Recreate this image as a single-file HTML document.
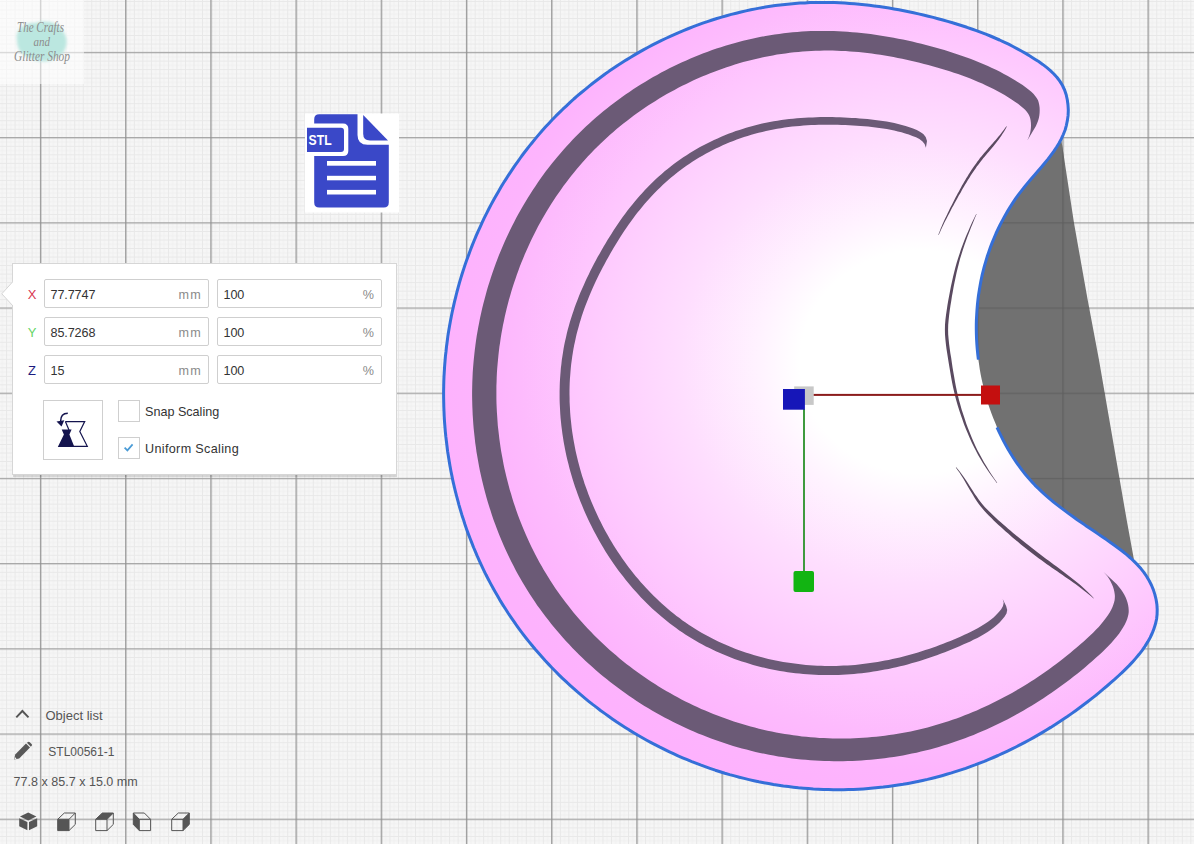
<!DOCTYPE html>
<html><head><meta charset="utf-8"><title>STL viewer</title><style>
html,body{margin:0;padding:0}
body{width:1194px;height:844px;overflow:hidden;position:relative;background:#f6f6f6;font-family:"Liberation Sans",sans-serif}
.abs{position:absolute}
.wm{position:absolute;left:0;top:0;width:84px;height:84px;background:rgba(255,255,255,.55)}
.panel{position:absolute;left:12px;top:263px;width:383px;height:210px;background:#fff;border:1px solid #d6d6d6;box-sizing:content-box}
.pshadow{position:absolute;left:12.5px;top:474.5px;width:384px;height:2px;background:rgba(0,0,0,.13)}
.lbl{position:absolute;left:13px;width:12px;text-align:center;font-size:13px;line-height:28px}
.inp{position:absolute;width:163px;height:27px;border:1px solid #cfcfcf;border-radius:2px;background:#fff;box-sizing:content-box}
.inp .v{position:absolute;left:5.5px;top:0.5px;line-height:28px;font-size:12.6px;color:#333;letter-spacing:-0.1px}
.inp .u{position:absolute;right:7px;top:0.5px;line-height:28px;font-size:12.6px;color:#8a8a8a}
.inp .u.mm{letter-spacing:1.2px;right:6px}
.btn{position:absolute;left:30px;top:136px;width:58px;height:58px;border:1px solid #cfcfcf;background:#fff}
.cb{position:absolute;left:105px;width:20px;height:20px;border:1px solid #cfcfcf;background:#fff}
.ct{position:absolute;left:132px;font-size:12.6px;line-height:16px;color:#333;white-space:nowrap}
.t{position:absolute;color:#555;line-height:16px;white-space:nowrap}
</style></head><body>
<svg width="1194" height="844" viewBox="0 0 1194 844" style="position:absolute;left:0;top:0">
<defs>
<pattern id="minor" x="40.15" y="52.1" width="8.52" height="8.52" patternUnits="userSpaceOnUse"><path d="M4.76,0V8.52M0,4.76H8.52" stroke="#f0f0f0" stroke-width="1" fill="none"/><path d="M0.5,0V8.52M0,0.5H8.52" stroke="#e8e8e8" stroke-width="1" fill="none"/></pattern>
<pattern id="major" x="39.9" y="51.85" width="85.2" height="85.2" patternUnits="userSpaceOnUse"><path d="M0.75,0V85.2M0,0.75H85.2" stroke="#8f8f8f" stroke-width="1.2" fill="none"/></pattern>
<pattern id="majord" x="39.9" y="51.85" width="85.2" height="85.2" patternUnits="userSpaceOnUse"><path d="M0.75,0V85.2M0,0.75H85.2" stroke="#5e5e5e" stroke-width="1.2" fill="none"/></pattern>
<radialGradient id="pg" gradientUnits="userSpaceOnUse" cx="920" cy="362" r="480" gradientTransform="translate(0,362) scale(1,0.93) translate(0,-362)">
<stop offset="0" stop-color="#ffffff"/><stop offset="0.25" stop-color="#ffffff"/><stop offset="0.333" stop-color="#fff3ff"/><stop offset="0.5" stop-color="#fedefe"/><stop offset="0.73" stop-color="#fec6fe"/><stop offset="0.833" stop-color="#fdbbfd"/><stop offset="0.917" stop-color="#fdb4fd"/><stop offset="1" stop-color="#fdb2fd"/>
</radialGradient>
</defs>
<rect width="1194" height="844" fill="#f6f6f6"/>
<rect width="1194" height="844" fill="url(#minor)"/>
<rect width="1194" height="844" fill="url(#major)"/>
<path d="M1061.5,141.0 L1074.0,223.0 L1087.7,300.0 L1099.0,360.0 L1126.7,520.0 L1134.2,561.0 L1100.0,561.0 L1000.0,500.0 L950.0,350.0 L1000.0,200.0Z" fill="#717171"/>
<path d="M1061.5,141.0 L1074.0,223.0 L1087.7,300.0 L1099.0,360.0 L1126.7,520.0 L1134.2,561.0 L1100.0,561.0 L1000.0,500.0 L950.0,350.0 L1000.0,200.0Z" fill="url(#majord)"/>
<path d="M800.0,3.1 L804.9,2.9 L809.9,2.6 L814.8,2.5 L819.8,2.4 L824.7,2.4 L829.7,2.5 L834.6,2.6 L839.6,2.8 L844.6,3.1 L849.5,3.4 L854.5,3.8 L859.4,4.2 L864.4,4.7 L869.3,5.3 L874.3,5.9 L879.2,6.5 L884.1,7.3 L889.1,8.1 L894.0,8.9 L898.9,9.8 L903.8,10.7 L908.7,11.7 L913.6,12.8 L918.5,13.9 L923.4,15.0 L928.3,16.2 L933.2,17.4 L938.0,18.7 L942.9,20.0 L947.7,21.4 L952.5,22.8 L957.3,24.3 L962.1,25.8 L966.9,27.3 L971.7,29.0 L976.4,30.6 L981.1,32.4 L985.8,34.2 L990.4,36.0 L995.0,38.0 L999.6,40.0 L1004.1,42.1 L1008.6,44.2 L1013.0,46.5 L1017.4,48.8 L1021.8,51.2 L1026.1,53.6 L1030.3,56.2 L1034.5,58.9 L1038.7,61.6 L1042.7,64.4 L1046.6,67.4 L1050.4,70.6 L1053.9,74.0 L1057.1,77.5 L1060.0,81.4 L1062.5,85.5 L1064.6,90.0 L1066.2,94.8 L1067.3,99.8 L1068.0,105.0 L1068.3,110.2 L1068.1,115.4 L1067.4,120.4 L1066.4,125.3 L1065.1,130.0 L1063.3,134.5 L1061.3,138.9 L1059.0,143.2 L1056.5,147.3 L1053.8,151.4 L1050.8,155.4 L1047.8,159.4 L1044.6,163.3 L1041.3,167.2 L1038.0,171.0 L1034.6,174.9 L1031.3,178.7 L1028.0,182.6 L1024.7,186.6 L1021.6,190.6 L1018.5,194.6 L1015.6,198.7 L1012.8,202.9 L1010.1,207.1 L1007.5,211.4 L1005.0,215.7 L1002.6,220.1 L1000.3,224.5 L998.1,229.0 L996.0,233.5 L994.1,238.1 L992.2,242.6 L990.4,247.3 L988.8,251.9 L987.2,256.6 L985.8,261.4 L984.4,266.1 L983.2,270.9 L982.0,275.7 L981.0,280.5 L980.1,285.4 L979.3,290.3 L978.5,295.2 L977.9,300.1 L977.4,305.0 L977.0,309.9 L976.7,314.9 L976.4,319.9 L976.3,324.8 L976.3,329.8 L976.4,334.8 L976.6,339.7 L976.9,344.7 L977.3,349.7 L977.8,354.6 L978.4,359.6 L979.1,364.6 L979.8,369.5 L980.7,374.4 L981.7,379.4 L982.8,384.3 L984.0,389.1 L985.3,394.0 L986.7,398.8 L988.1,403.7 L989.7,408.5 L991.4,413.2 L993.2,418.0 L995.1,422.6 L997.0,427.3 L999.1,431.9 L1001.3,436.4 L1003.5,440.9 L1005.9,445.3 L1008.4,449.7 L1011.0,454.0 L1013.6,458.2 L1016.4,462.3 L1019.3,466.4 L1022.2,470.4 L1025.3,474.2 L1028.5,478.0 L1031.8,481.7 L1035.1,485.3 L1038.6,488.7 L1042.2,492.1 L1045.8,495.4 L1049.5,498.7 L1053.3,501.8 L1057.2,504.9 L1061.1,507.9 L1065.1,510.9 L1069.1,513.9 L1073.2,516.8 L1077.2,519.7 L1081.4,522.5 L1085.5,525.4 L1089.7,528.2 L1093.9,531.0 L1098.0,533.9 L1102.2,536.8 L1106.4,539.6 L1110.5,542.5 L1114.7,545.5 L1118.8,548.5 L1122.8,551.5 L1126.7,554.7 L1130.5,558.0 L1134.1,561.4 L1137.6,564.9 L1140.9,568.6 L1143.9,572.4 L1146.7,576.5 L1149.2,580.8 L1151.5,585.3 L1153.4,589.9 L1154.9,594.6 L1156.1,599.5 L1156.9,604.4 L1157.2,609.3 L1157.1,614.2 L1156.6,619.0 L1155.5,623.8 L1154.1,628.4 L1152.3,633.0 L1150.2,637.5 L1147.7,641.9 L1145.1,646.1 L1142.2,650.3 L1139.1,654.3 L1135.9,658.1 L1132.6,661.9 L1129.1,665.6 L1125.6,669.1 L1122.0,672.6 L1118.3,676.0 L1114.6,679.4 L1110.8,682.7 L1107.0,686.0 L1103.2,689.2 L1099.4,692.4 L1095.5,695.6 L1091.6,698.7 L1087.6,701.8 L1083.6,704.8 L1079.6,707.8 L1075.6,710.7 L1071.5,713.6 L1067.4,716.5 L1063.2,719.3 L1059.1,722.0 L1054.9,724.7 L1050.7,727.4 L1046.4,730.0 L1042.1,732.6 L1037.8,735.1 L1033.5,737.6 L1029.2,740.0 L1024.8,742.4 L1020.4,744.7 L1015.9,747.0 L1011.5,749.2 L1007.0,751.3 L1002.5,753.4 L998.0,755.5 L993.4,757.5 L988.9,759.4 L984.3,761.3 L979.6,763.1 L975.0,764.9 L970.3,766.6 L965.7,768.3 L960.9,769.9 L956.2,771.4 L951.5,772.9 L946.7,774.3 L941.9,775.7 L937.1,777.0 L932.3,778.2 L927.5,779.4 L922.6,780.5 L917.8,781.5 L912.9,782.5 L908.0,783.4 L903.1,784.3 L898.1,785.1 L893.2,785.8 L888.2,786.5 L883.3,787.1 L878.3,787.6 L873.3,788.1 L868.4,788.5 L863.4,788.9 L858.4,789.2 L853.4,789.4 L848.4,789.6 L843.4,789.7 L838.4,789.7 L833.4,789.7 L828.4,789.6 L823.3,789.5 L818.3,789.2 L813.3,789.0 L808.3,788.6 L803.4,788.2 L798.4,787.8 L793.4,787.2 L788.4,786.6 L783.4,786.0 L778.5,785.3 L773.5,784.5 L768.6,783.6 L763.7,782.7 L758.8,781.8 L753.9,780.7 L749.0,779.6 L744.1,778.4 L739.3,777.2 L734.5,775.9 L729.6,774.6 L724.8,773.2 L720.1,771.7 L715.3,770.2 L710.6,768.6 L705.8,766.9 L701.1,765.2 L696.5,763.4 L691.8,761.6 L687.2,759.7 L682.6,757.8 L678.0,755.8 L673.4,753.7 L668.9,751.6 L664.4,749.4 L659.9,747.2 L655.5,744.9 L651.1,742.6 L646.7,740.2 L642.3,737.7 L638.0,735.3 L633.7,732.7 L629.4,730.1 L625.2,727.4 L621.0,724.7 L616.8,722.0 L612.7,719.2 L608.6,716.3 L604.6,713.4 L600.5,710.5 L596.6,707.4 L592.6,704.4 L588.7,701.3 L584.8,698.1 L581.0,694.9 L577.2,691.7 L573.5,688.4 L569.8,685.1 L566.1,681.7 L562.5,678.3 L558.9,674.8 L555.4,671.3 L551.9,667.7 L548.5,664.1 L545.1,660.5 L541.8,656.8 L538.5,653.0 L535.2,649.3 L532.1,645.5 L528.9,641.6 L525.8,637.7 L522.8,633.8 L519.8,629.8 L516.9,625.8 L514.0,621.7 L511.2,617.6 L508.4,613.5 L505.7,609.3 L503.0,605.1 L500.4,600.9 L497.9,596.6 L495.4,592.3 L493.0,588.0 L490.6,583.6 L488.3,579.2 L486.0,574.8 L483.8,570.3 L481.7,565.8 L479.6,561.3 L477.5,556.7 L475.6,552.1 L473.6,547.5 L471.8,542.9 L470.0,538.3 L468.2,533.6 L466.5,528.9 L464.9,524.2 L463.4,519.4 L461.8,514.7 L460.4,509.9 L459.0,505.1 L457.7,500.2 L456.4,495.4 L455.2,490.6 L454.0,485.7 L452.9,480.8 L451.9,475.9 L450.9,471.0 L450.0,466.1 L449.2,461.2 L448.4,456.2 L447.6,451.3 L447.0,446.3 L446.4,441.3 L445.8,436.4 L445.3,431.4 L444.9,426.4 L444.5,421.4 L444.2,416.4 L444.0,411.4 L443.8,406.4 L443.7,401.4 L443.6,396.4 L443.6,391.4 L443.7,386.4 L443.8,381.4 L444.0,376.4 L444.3,371.4 L444.6,366.4 L445.0,361.4 L445.4,356.4 L446.0,351.5 L446.5,346.5 L447.2,341.5 L447.8,336.6 L448.6,331.6 L449.4,326.7 L450.3,321.8 L451.2,316.9 L452.2,312.0 L453.3,307.1 L454.4,302.2 L455.6,297.4 L456.8,292.5 L458.1,287.7 L459.4,282.9 L460.8,278.1 L462.3,273.3 L463.8,268.6 L465.4,263.8 L467.1,259.1 L468.8,254.4 L470.5,249.8 L472.3,245.1 L474.2,240.5 L476.1,235.9 L478.1,231.3 L480.2,226.8 L482.3,222.2 L484.4,217.7 L486.6,213.3 L488.9,208.8 L491.2,204.4 L493.6,200.0 L496.0,195.7 L498.5,191.4 L501.0,187.1 L503.6,182.8 L506.3,178.6 L509.0,174.4 L511.7,170.3 L514.5,166.1 L517.4,162.1 L520.3,158.0 L523.2,154.0 L526.3,150.0 L529.3,146.1 L532.5,142.2 L535.6,138.4 L538.8,134.6 L542.1,130.8 L545.4,127.1 L548.8,123.4 L552.2,119.8 L555.7,116.2 L559.3,112.7 L562.8,109.2 L566.5,105.8 L570.1,102.4 L573.8,99.0 L577.6,95.7 L581.4,92.5 L585.3,89.3 L589.2,86.1 L593.1,83.0 L597.1,80.0 L601.1,77.0 L605.1,74.0 L609.2,71.1 L613.4,68.3 L617.5,65.5 L621.8,62.8 L626.0,60.1 L630.3,57.5 L634.6,54.9 L638.9,52.4 L643.3,49.9 L647.7,47.5 L652.1,45.2 L656.6,42.9 L661.1,40.7 L665.6,38.5 L670.2,36.4 L674.7,34.3 L679.3,32.3 L684.0,30.4 L688.6,28.5 L693.3,26.7 L698.0,24.9 L702.7,23.2 L707.4,21.6 L712.2,20.0 L716.9,18.5 L721.7,17.1 L726.5,15.7 L731.3,14.4 L736.2,13.2 L741.0,12.0 L745.9,10.9 L750.8,9.8 L755.6,8.9 L760.5,7.9 L765.4,7.1 L770.3,6.3 L775.3,5.6 L780.2,5.0 L785.1,4.4 L790.1,3.9 L795.0,3.5Z" fill="url(#pg)"/>
<path d="M1116.8,584.3 L1119.0,586.9 L1121.0,589.4 L1122.7,591.9 L1124.2,594.4 L1125.5,597.0 L1126.6,599.7 L1127.5,602.4 L1128.1,605.1 L1128.5,607.6 L1128.7,610.0 L1128.7,612.2 L1128.4,614.4 L1127.9,616.6 L1127.2,619.0 L1126.2,621.6 L1124.8,624.4 L1123.2,627.3 L1121.3,630.3 L1119.2,633.4 L1116.8,636.5 L1114.2,639.6 L1111.5,642.7 L1108.6,645.8 L1105.6,648.8 L1102.4,651.9 L1099.1,655.0 L1095.6,658.1 L1092.1,661.2 L1088.5,664.3 L1084.9,667.4 L1081.3,670.4 L1077.6,673.4 L1073.9,676.3 L1070.2,679.2 L1066.5,682.0 L1062.7,684.8 L1058.9,687.6 L1055.1,690.3 L1051.2,693.0 L1047.4,695.6 L1043.5,698.2 L1039.5,700.7 L1035.6,703.2 L1031.6,705.7 L1027.6,708.1 L1023.6,710.4 L1019.5,712.7 L1015.5,715.0 L1011.4,717.2 L1007.3,719.4 L1003.1,721.5 L999.0,723.6 L994.8,725.6 L990.6,727.5 L986.4,729.5 L982.1,731.3 L977.9,733.1 L973.6,734.9 L969.3,736.6 L965.0,738.2 L960.7,739.8 L956.3,741.3 L952.0,742.8 L947.6,744.3 L943.2,745.6 L938.8,746.9 L934.3,748.2 L929.9,749.4 L925.4,750.5 L921.0,751.6 L916.5,752.7 L911.9,753.6 L907.4,754.5 L902.9,755.4 L898.3,756.2 L893.8,756.9 L889.2,757.6 L884.6,758.2 L880.0,758.8 L875.4,759.3 L870.8,759.7 L866.2,760.1 L861.5,760.4 L856.9,760.7 L852.3,760.9 L847.6,761.1 L843.0,761.2 L838.3,761.2 L833.7,761.2 L829.0,761.1 L824.4,761.0 L819.7,760.8 L815.1,760.5 L810.5,760.2 L805.8,759.8 L801.2,759.4 L796.6,758.9 L792.0,758.4 L787.4,757.8 L782.8,757.1 L778.2,756.4 L773.6,755.6 L769.1,754.7 L764.5,753.8 L760.0,752.9 L755.5,751.9 L750.9,750.8 L746.5,749.6 L742.0,748.4 L737.5,747.2 L733.1,745.9 L728.6,744.5 L724.2,743.1 L719.8,741.6 L715.4,740.1 L711.1,738.5 L706.7,736.8 L702.4,735.1 L698.1,733.4 L693.8,731.6 L689.6,729.7 L685.3,727.8 L681.1,725.8 L676.9,723.8 L672.8,721.8 L668.6,719.6 L664.5,717.5 L660.5,715.2 L656.4,713.0 L652.4,710.7 L648.4,708.3 L644.4,705.9 L640.5,703.4 L636.6,700.9 L632.7,698.3 L628.9,695.7 L625.1,693.0 L621.3,690.3 L617.6,687.6 L613.9,684.8 L610.2,682.0 L606.6,679.1 L603.0,676.2 L599.4,673.2 L595.9,670.2 L592.4,667.1 L589.0,664.0 L585.6,660.9 L582.3,657.7 L578.9,654.5 L575.7,651.2 L572.4,647.9 L569.3,644.6 L566.1,641.2 L563.0,637.8 L560.0,634.3 L557.0,630.8 L554.0,627.3 L551.1,623.7 L548.3,620.1 L545.5,616.5 L542.7,612.8 L540.0,609.1 L537.3,605.4 L534.7,601.6 L532.2,597.8 L529.7,593.9 L527.2,590.1 L524.8,586.1 L522.5,582.2 L520.2,578.2 L517.9,574.2 L515.7,570.2 L513.6,566.1 L511.5,562.0 L509.4,557.8 L507.5,553.7 L505.5,549.5 L503.6,545.3 L501.8,541.0 L500.0,536.7 L498.3,532.4 L496.6,528.1 L495.0,523.8 L493.4,519.4 L491.9,515.0 L490.5,510.6 L489.1,506.2 L487.7,501.8 L486.4,497.3 L485.2,492.8 L484.0,488.3 L482.9,483.8 L481.8,479.3 L480.8,474.8 L479.8,470.2 L478.9,465.6 L478.1,461.1 L477.3,456.5 L476.5,451.9 L475.9,447.3 L475.2,442.7 L474.7,438.0 L474.2,433.4 L473.7,428.8 L473.3,424.1 L473.0,419.5 L472.7,414.9 L472.5,410.2 L472.3,405.6 L472.2,400.9 L472.1,396.3 L472.1,391.6 L472.2,387.0 L472.3,382.3 L472.5,377.7 L472.7,373.0 L473.0,368.4 L473.4,363.8 L473.8,359.2 L474.3,354.5 L474.8,349.9 L475.4,345.3 L476.0,340.7 L476.7,336.1 L477.5,331.5 L478.3,326.9 L479.2,322.4 L480.1,317.8 L481.1,313.3 L482.1,308.8 L483.2,304.2 L484.4,299.7 L485.6,295.2 L486.8,290.8 L488.1,286.3 L489.5,281.9 L490.9,277.5 L492.4,273.0 L493.9,268.7 L495.5,264.3 L497.1,260.0 L498.8,255.6 L500.6,251.3 L502.4,247.1 L504.2,242.8 L506.1,238.6 L508.0,234.4 L510.0,230.2 L512.1,226.0 L514.2,221.9 L516.3,217.8 L518.5,213.8 L520.8,209.7 L523.1,205.7 L525.5,201.7 L527.9,197.8 L530.3,193.9 L532.8,190.0 L535.4,186.2 L538.0,182.3 L540.6,178.6 L543.3,174.8 L546.0,171.1 L548.8,167.4 L551.7,163.8 L554.6,160.2 L557.5,156.7 L560.5,153.2 L563.5,149.7 L566.6,146.3 L569.7,142.9 L572.8,139.5 L576.0,136.2 L579.3,133.0 L582.6,129.7 L585.9,126.6 L589.3,123.4 L592.8,120.3 L596.2,117.3 L599.8,114.3 L603.3,111.3 L606.9,108.4 L610.6,105.5 L614.3,102.7 L618.0,99.9 L621.7,97.2 L625.5,94.5 L629.4,91.9 L633.2,89.3 L637.1,86.8 L641.1,84.3 L645.0,81.9 L649.0,79.5 L653.1,77.1 L657.1,74.9 L661.2,72.6 L665.3,70.5 L669.4,68.3 L673.6,66.3 L677.8,64.2 L682.0,62.3 L686.3,60.4 L690.5,58.5 L694.8,56.7 L699.1,55.0 L703.4,53.3 L707.8,51.7 L712.1,50.1 L716.5,48.6 L720.9,47.2 L725.3,45.8 L729.7,44.5 L734.2,43.2 L738.6,42.0 L743.1,40.8 L747.6,39.7 L752.1,38.7 L756.5,37.7 L761.0,36.8 L765.6,36.0 L770.1,35.2 L774.6,34.5 L779.1,33.9 L783.6,33.3 L788.2,32.8 L792.7,32.3 L797.3,31.9 L801.8,31.6 L806.3,31.3 L810.9,31.1 L815.4,31.0 L820.0,30.9 L824.6,30.9 L829.2,31.0 L833.7,31.1 L838.3,31.3 L842.9,31.5 L847.5,31.8 L852.1,32.2 L856.7,32.6 L861.3,33.0 L866.0,33.6 L870.6,34.1 L875.2,34.8 L879.8,35.4 L884.5,36.2 L889.1,37.0 L893.7,37.8 L898.3,38.7 L903.0,39.6 L907.6,40.6 L912.2,41.6 L916.8,42.7 L921.4,43.8 L926.0,45.0 L930.7,46.2 L935.3,47.5 L939.8,48.8 L944.4,50.1 L948.9,51.5 L953.4,52.9 L957.9,54.4 L962.3,55.9 L966.7,57.4 L971.0,59.0 L975.3,60.7 L979.5,62.4 L983.7,64.2 L987.9,66.0 L992.0,67.9 L996.0,69.8 L1000.0,71.8 L1003.9,73.9 L1007.8,76.0 L1011.6,78.2 L1015.4,80.5 L1019.0,82.8 L1022.6,85.1 L1025.9,87.4 L1028.8,89.7 L1031.3,91.8 L1033.4,93.8 L1035.0,95.7 L1036.3,97.4 L1037.3,99.0 L1038.1,100.6 L1038.7,102.5 L1039.2,104.8 L1039.6,107.5 L1039.7,110.3 L1039.6,113.1 L1039.3,115.8 L1038.8,118.3 L1038.0,120.9 L1037.0,123.5 L1035.8,126.2 L1027.3,140.4 L1028.5,137.8 L1029.4,135.3 L1030.1,132.9 L1030.6,130.5 L1030.9,128.0 L1031.0,125.4 L1030.9,122.7 L1030.6,120.2 L1030.1,118.0 L1029.5,116.2 L1028.8,114.7 L1027.9,113.2 L1026.6,111.6 L1025.1,109.8 L1023.1,107.9 L1020.7,105.9 L1018.0,103.8 L1014.9,101.7 L1011.6,99.4 L1008.1,97.2 L1004.6,95.1 L1001.0,93.1 L997.3,91.1 L993.6,89.1 L989.9,87.2 L986.1,85.4 L982.2,83.6 L978.3,81.9 L974.3,80.2 L970.3,78.6 L966.3,77.1 L962.2,75.6 L958.1,74.1 L953.9,72.7 L949.7,71.3 L945.5,70.0 L941.2,68.7 L937.0,67.4 L932.6,66.2 L928.3,65.0 L924.0,63.9 L919.6,62.8 L915.3,61.7 L910.9,60.7 L906.6,59.7 L902.2,58.8 L897.8,57.9 L893.5,57.1 L889.1,56.3 L884.8,55.5 L880.4,54.8 L876.1,54.2 L871.7,53.6 L867.4,53.1 L863.0,52.6 L858.7,52.1 L854.3,51.8 L850.0,51.4 L845.7,51.1 L841.3,50.9 L837.0,50.8 L832.7,50.6 L828.4,50.6 L824.1,50.6 L819.8,50.7 L815.5,50.8 L811.2,51.0 L806.9,51.2 L802.6,51.5 L798.4,51.9 L794.1,52.3 L789.8,52.8 L785.5,53.4 L781.3,54.0 L777.0,54.6 L772.8,55.4 L768.5,56.2 L764.3,57.0 L760.1,57.9 L755.8,58.9 L751.6,59.9 L747.4,61.0 L743.2,62.1 L739.0,63.3 L734.9,64.6 L730.7,65.9 L726.6,67.3 L722.5,68.7 L718.3,70.2 L714.3,71.7 L710.2,73.3 L706.1,74.9 L702.1,76.6 L698.1,78.3 L694.1,80.1 L690.1,82.0 L686.2,83.9 L682.2,85.8 L678.3,87.8 L674.5,89.9 L670.6,92.0 L666.8,94.1 L663.0,96.3 L659.2,98.6 L655.5,100.9 L651.8,103.2 L648.1,105.6 L644.5,108.0 L640.9,110.5 L637.3,113.0 L633.8,115.6 L630.3,118.2 L626.8,120.9 L623.4,123.6 L620.0,126.3 L616.6,129.1 L613.3,131.9 L610.0,134.8 L606.8,137.7 L603.6,140.7 L600.4,143.7 L597.3,146.7 L594.2,149.8 L591.2,152.9 L588.2,156.0 L585.3,159.2 L582.4,162.5 L579.6,165.7 L576.8,169.1 L574.0,172.4 L571.3,175.8 L568.6,179.2 L566.0,182.7 L563.4,186.1 L560.9,189.7 L558.4,193.2 L555.9,196.8 L553.5,200.4 L551.2,204.1 L548.9,207.8 L546.6,211.5 L544.4,215.2 L542.2,219.0 L540.1,222.8 L538.0,226.6 L536.0,230.5 L534.0,234.4 L532.1,238.3 L530.2,242.2 L528.4,246.2 L526.6,250.2 L524.8,254.2 L523.2,258.2 L521.5,262.3 L519.9,266.3 L518.4,270.4 L516.9,274.5 L515.5,278.7 L514.1,282.8 L512.7,287.0 L511.4,291.2 L510.2,295.4 L509.0,299.6 L507.9,303.8 L506.8,308.0 L505.8,312.3 L504.8,316.6 L503.9,320.9 L503.0,325.1 L502.2,329.4 L501.4,333.8 L500.7,338.1 L500.1,342.4 L499.4,346.7 L498.9,351.1 L498.4,355.4 L498.0,359.8 L497.6,364.1 L497.2,368.5 L496.9,372.9 L496.7,377.2 L496.6,381.6 L496.4,386.0 L496.4,390.4 L496.4,394.7 L496.4,399.1 L496.5,403.5 L496.7,407.9 L496.9,412.3 L497.2,416.6 L497.5,421.0 L497.8,425.4 L498.3,429.7 L498.8,434.1 L499.3,438.4 L499.9,442.8 L500.5,447.1 L501.2,451.5 L502.0,455.8 L502.8,460.1 L503.6,464.4 L504.5,468.7 L505.5,473.0 L506.5,477.2 L507.6,481.5 L508.7,485.7 L509.8,489.9 L511.1,494.1 L512.3,498.3 L513.6,502.5 L515.0,506.6 L516.4,510.8 L517.9,514.9 L519.4,519.0 L521.0,523.0 L522.6,527.1 L524.3,531.1 L526.0,535.1 L527.8,539.1 L529.6,543.0 L531.5,546.9 L533.4,550.8 L535.4,554.7 L537.4,558.5 L539.5,562.4 L541.6,566.1 L543.8,569.9 L546.0,573.6 L548.3,577.3 L550.6,581.0 L552.9,584.6 L555.3,588.2 L557.8,591.7 L560.3,595.3 L562.9,598.7 L565.5,602.2 L568.1,605.6 L570.8,609.0 L573.5,612.4 L576.3,615.7 L579.1,619.0 L582.0,622.3 L584.9,625.5 L587.9,628.7 L590.9,631.8 L593.9,634.9 L597.0,638.0 L600.1,641.0 L603.3,644.0 L606.5,647.0 L609.7,649.9 L613.0,652.8 L616.3,655.6 L619.6,658.4 L623.0,661.2 L626.4,663.9 L629.9,666.5 L633.4,669.2 L636.9,671.8 L640.4,674.3 L644.0,676.8 L647.6,679.3 L651.3,681.7 L655.0,684.1 L658.7,686.4 L662.4,688.7 L666.2,690.9 L670.0,693.1 L673.8,695.2 L677.6,697.3 L681.5,699.4 L685.4,701.4 L689.3,703.3 L693.2,705.2 L697.2,707.1 L701.2,708.9 L705.2,710.6 L709.2,712.3 L713.3,714.0 L717.4,715.6 L721.4,717.1 L725.6,718.6 L729.7,720.1 L733.8,721.5 L738.0,722.8 L742.2,724.1 L746.4,725.3 L750.6,726.5 L754.8,727.6 L759.0,728.7 L763.3,729.7 L767.5,730.7 L771.8,731.6 L776.1,732.4 L780.4,733.2 L784.7,734.0 L789.0,734.6 L793.3,735.3 L797.7,735.8 L802.0,736.4 L806.3,736.8 L810.7,737.2 L815.1,737.6 L819.4,737.9 L823.8,738.1 L828.2,738.3 L832.6,738.4 L836.9,738.5 L841.3,738.5 L845.7,738.5 L850.1,738.4 L854.4,738.3 L858.8,738.1 L863.2,737.8 L867.5,737.5 L871.9,737.1 L876.2,736.7 L880.6,736.2 L884.9,735.7 L889.2,735.1 L893.5,734.5 L897.8,733.8 L902.1,733.0 L906.4,732.2 L910.7,731.4 L914.9,730.5 L919.2,729.5 L923.4,728.5 L927.6,727.4 L931.8,726.3 L935.9,725.1 L940.1,723.8 L944.2,722.6 L948.4,721.2 L952.5,719.8 L956.6,718.4 L960.6,716.9 L964.7,715.3 L968.8,713.7 L972.8,712.1 L976.8,710.4 L980.8,708.6 L984.8,706.8 L988.7,705.0 L992.6,703.1 L996.6,701.1 L1000.5,699.1 L1004.3,697.1 L1008.2,695.0 L1012.0,692.9 L1015.8,690.7 L1019.6,688.5 L1023.4,686.2 L1027.1,683.9 L1030.9,681.6 L1034.6,679.2 L1038.2,676.7 L1041.9,674.2 L1045.5,671.7 L1049.1,669.2 L1052.7,666.6 L1056.2,663.9 L1059.8,661.2 L1063.3,658.5 L1066.7,655.8 L1070.2,653.0 L1073.6,650.1 L1077.0,647.3 L1080.4,644.3 L1083.7,641.4 L1086.9,638.5 L1090.1,635.6 L1093.1,632.7 L1095.9,629.8 L1098.7,626.9 L1101.2,624.0 L1103.6,621.1 L1105.9,618.1 L1107.9,615.2 L1109.7,612.4 L1111.2,609.7 L1112.5,607.0 L1113.4,604.6 L1114.1,602.3 L1114.6,600.2 L1114.8,598.2 L1114.9,596.1 L1114.7,593.9 L1114.3,591.5 L1113.7,589.0 L1112.9,586.4 L1111.8,583.9 L1110.6,581.4 L1109.2,579.0 L1107.6,576.6 L1105.7,574.3 L1103.6,571.9Z" fill="#6b5a76"/>
<path d="M927.0,140.9 L925.7,137.0 L923.3,134.1 L920.3,131.9 L916.8,130.1 L913.1,128.6 L909.4,127.3 L905.6,126.1 L901.9,125.0 L898.1,124.0 L894.3,123.1 L890.5,122.3 L886.7,121.6 L882.8,121.0 L879.0,120.4 L875.1,119.9 L871.3,119.5 L867.4,119.1 L863.5,118.7 L859.6,118.4 L855.7,118.1 L851.8,117.9 L847.9,117.7 L844.0,117.5 L840.0,117.3 L836.1,117.2 L832.2,117.1 L828.3,117.1 L824.4,117.1 L820.4,117.1 L816.5,117.2 L812.6,117.4 L808.7,117.5 L804.8,117.7 L800.8,118.0 L796.9,118.3 L793.0,118.7 L789.1,119.1 L785.3,119.6 L781.4,120.1 L777.5,120.7 L773.7,121.3 L769.8,122.0 L766.0,122.8 L762.1,123.6 L758.3,124.5 L754.5,125.4 L750.8,126.4 L747.0,127.5 L743.2,128.7 L739.5,129.9 L735.8,131.1 L732.1,132.5 L728.4,133.8 L724.8,135.3 L721.2,136.8 L717.6,138.4 L714.0,140.0 L710.5,141.7 L707.0,143.4 L703.5,145.3 L700.0,147.1 L696.6,149.0 L693.2,151.0 L689.9,153.1 L686.6,155.2 L683.3,157.3 L680.1,159.5 L676.9,161.8 L673.8,164.1 L670.7,166.4 L667.6,168.9 L664.6,171.3 L661.7,173.9 L658.7,176.4 L655.9,179.0 L653.1,181.7 L650.3,184.4 L647.6,187.2 L644.9,190.0 L642.3,192.9 L639.7,195.8 L637.1,198.7 L634.6,201.7 L632.2,204.7 L629.7,207.8 L627.3,210.8 L625.0,214.0 L622.7,217.1 L620.4,220.3 L618.2,223.5 L616.0,226.8 L613.8,230.1 L611.7,233.4 L609.6,236.7 L607.5,240.0 L605.5,243.4 L603.5,246.8 L601.5,250.2 L599.6,253.7 L597.6,257.1 L595.8,260.6 L593.9,264.1 L592.1,267.6 L590.3,271.1 L588.6,274.7 L586.8,278.2 L585.2,281.8 L583.6,285.4 L582.0,289.0 L580.4,292.6 L578.9,296.3 L577.5,299.9 L576.1,303.6 L574.7,307.3 L573.5,311.0 L572.2,314.7 L571.0,318.4 L569.9,322.1 L568.8,325.9 L567.8,329.6 L566.8,333.4 L566.0,337.2 L565.1,341.0 L564.3,344.8 L563.6,348.6 L563.0,352.4 L562.4,356.3 L561.8,360.1 L561.4,364.0 L560.9,367.8 L560.6,371.7 L560.3,375.5 L560.0,379.4 L559.8,383.3 L559.7,387.2 L559.6,391.0 L559.6,394.9 L559.6,398.8 L559.7,402.7 L559.9,406.6 L560.1,410.4 L560.3,414.3 L560.6,418.2 L561.0,422.1 L561.4,426.0 L561.9,429.8 L562.4,433.7 L563.0,437.5 L563.6,441.4 L564.3,445.2 L565.0,449.1 L565.8,452.9 L566.6,456.7 L567.5,460.5 L568.5,464.3 L569.4,468.1 L570.5,471.9 L571.6,475.7 L572.7,479.4 L573.9,483.2 L575.1,486.9 L576.4,490.6 L577.7,494.3 L579.1,498.0 L580.5,501.7 L582.0,505.3 L583.5,509.0 L585.0,512.6 L586.7,516.2 L588.3,519.7 L590.0,523.3 L591.8,526.8 L593.5,530.3 L595.4,533.8 L597.3,537.3 L599.2,540.7 L601.1,544.1 L603.2,547.5 L605.2,550.9 L607.3,554.2 L609.4,557.5 L611.6,560.8 L613.8,564.0 L616.1,567.2 L618.4,570.4 L620.8,573.5 L623.2,576.6 L625.6,579.7 L628.1,582.8 L630.6,585.8 L633.1,588.7 L635.7,591.6 L638.4,594.5 L641.0,597.4 L643.8,600.2 L646.5,603.0 L649.3,605.7 L652.1,608.4 L655.0,611.0 L657.9,613.6 L660.8,616.1 L663.8,618.6 L666.8,621.1 L669.9,623.5 L673.0,625.8 L676.1,628.1 L679.3,630.4 L682.5,632.6 L685.7,634.7 L689.0,636.8 L692.3,638.8 L695.7,640.8 L699.0,642.7 L702.4,644.6 L705.9,646.4 L709.4,648.1 L712.9,649.8 L716.4,651.5 L720.0,653.1 L723.6,654.6 L727.2,656.1 L730.8,657.5 L734.5,658.9 L738.2,660.2 L741.9,661.4 L745.6,662.6 L749.4,663.8 L753.1,664.9 L756.9,665.9 L760.7,666.9 L764.5,667.8 L768.4,668.7 L772.2,669.5 L776.1,670.2 L779.9,670.9 L783.8,671.6 L787.7,672.2 L791.6,672.7 L795.5,673.2 L799.4,673.6 L803.3,674.0 L807.2,674.3 L811.1,674.6 L815.0,674.8 L819.0,675.0 L822.9,675.1 L826.8,675.1 L830.7,675.1 L834.6,675.1 L838.5,674.9 L842.4,674.8 L846.3,674.6 L850.2,674.3 L854.0,674.0 L857.9,673.6 L861.8,673.2 L865.6,672.7 L869.5,672.2 L873.4,671.6 L877.2,671.0 L881.0,670.3 L884.8,669.6 L888.7,668.9 L892.5,668.1 L896.3,667.2 L900.1,666.3 L903.9,665.4 L907.6,664.4 L911.4,663.3 L915.2,662.3 L918.9,661.2 L922.7,660.0 L926.4,658.8 L930.1,657.6 L933.8,656.3 L937.5,655.0 L941.2,653.6 L944.9,652.2 L948.6,650.8 L952.2,649.3 L955.9,647.8 L959.5,646.2 L963.1,644.6 L966.7,643.0 L970.3,641.4 L973.9,639.6 L977.4,637.9 L980.9,636.0 L984.3,634.0 L987.6,632.0 L990.8,629.8 L993.8,627.5 L996.8,625.0 L999.6,622.4 L1002.2,619.6 L1004.7,616.6 L1006.5,613.4 L1007.2,610.0 L1006.2,606.2 L1002.7,599.1 L1003.7,602.8 L1003.0,606.1 L1001.2,609.2 L998.9,612.1 L996.3,614.8 L993.6,617.4 L990.7,619.8 L987.7,622.0 L984.6,624.1 L981.4,626.1 L978.1,628.0 L974.8,629.8 L971.4,631.6 L967.9,633.2 L964.4,634.8 L960.9,636.4 L957.4,637.9 L953.9,639.4 L950.4,640.9 L946.8,642.3 L943.2,643.7 L939.7,645.1 L936.1,646.4 L932.5,647.7 L928.9,648.9 L925.3,650.1 L921.7,651.3 L918.0,652.4 L914.4,653.5 L910.8,654.5 L907.1,655.5 L903.4,656.5 L899.8,657.4 L896.1,658.3 L892.4,659.1 L888.7,659.9 L885.0,660.6 L881.3,661.3 L877.6,662.0 L873.8,662.6 L870.1,663.1 L866.4,663.6 L862.6,664.1 L858.9,664.5 L855.1,664.9 L851.4,665.2 L847.6,665.4 L843.8,665.6 L840.0,665.8 L836.3,665.9 L832.5,666.0 L828.7,666.0 L824.9,665.9 L821.1,665.8 L817.3,665.7 L813.5,665.5 L809.7,665.2 L805.9,664.9 L802.1,664.5 L798.3,664.1 L794.5,663.6 L790.8,663.1 L787.0,662.5 L783.2,661.9 L779.5,661.2 L775.7,660.5 L772.0,659.7 L768.3,658.9 L764.6,658.0 L760.9,657.0 L757.2,656.0 L753.6,655.0 L749.9,653.8 L746.3,652.7 L742.7,651.5 L739.1,650.2 L735.6,648.9 L732.1,647.5 L728.6,646.1 L725.1,644.6 L721.6,643.0 L718.2,641.5 L714.8,639.8 L711.4,638.1 L708.1,636.3 L704.8,634.5 L701.5,632.7 L698.2,630.8 L695.0,628.8 L691.9,626.8 L688.7,624.7 L685.6,622.5 L682.5,620.4 L679.5,618.1 L676.5,615.9 L673.5,613.5 L670.6,611.2 L667.7,608.7 L664.9,606.3 L662.0,603.8 L659.3,601.2 L656.5,598.6 L653.8,596.0 L651.1,593.3 L648.5,590.6 L645.9,587.8 L643.4,585.0 L640.8,582.2 L638.4,579.3 L635.9,576.4 L633.5,573.4 L631.2,570.4 L628.8,567.4 L626.6,564.4 L624.3,561.3 L622.1,558.2 L620.0,555.0 L617.9,551.9 L615.8,548.7 L613.7,545.4 L611.8,542.2 L609.8,538.9 L607.9,535.6 L606.0,532.2 L604.2,528.9 L602.4,525.5 L600.7,522.1 L599.0,518.7 L597.4,515.2 L595.8,511.8 L594.2,508.3 L592.7,504.8 L591.2,501.3 L589.8,497.7 L588.4,494.2 L587.1,490.6 L585.8,487.0 L584.5,483.4 L583.4,479.8 L582.2,476.2 L581.1,472.5 L580.1,468.9 L579.1,465.2 L578.1,461.5 L577.2,457.8 L576.3,454.1 L575.5,450.4 L574.8,446.7 L574.1,443.0 L573.4,439.3 L572.8,435.5 L572.2,431.8 L571.7,428.0 L571.3,424.3 L570.9,420.5 L570.5,416.8 L570.2,413.0 L570.0,409.2 L569.8,405.5 L569.6,401.7 L569.6,397.9 L569.5,394.2 L569.5,390.4 L569.6,386.6 L569.7,382.9 L569.9,379.1 L570.2,375.4 L570.5,371.6 L570.8,367.9 L571.2,364.1 L571.7,360.4 L572.2,356.7 L572.8,353.0 L573.4,349.2 L574.1,345.5 L574.9,341.9 L575.7,338.2 L576.5,334.5 L577.5,330.8 L578.5,327.2 L579.5,323.6 L580.6,319.9 L581.7,316.3 L582.9,312.7 L584.2,309.1 L585.5,305.6 L586.9,302.0 L588.3,298.5 L589.7,294.9 L591.2,291.4 L592.7,287.9 L594.3,284.4 L595.9,281.0 L597.6,277.5 L599.3,274.1 L601.0,270.7 L602.8,267.3 L604.6,263.9 L606.4,260.5 L608.3,257.2 L610.2,253.8 L612.1,250.5 L614.0,247.2 L616.0,243.9 L618.0,240.7 L620.0,237.5 L622.1,234.3 L624.2,231.1 L626.3,227.9 L628.5,224.8 L630.7,221.7 L632.9,218.7 L635.2,215.6 L637.5,212.6 L639.9,209.7 L642.3,206.7 L644.7,203.8 L647.2,201.0 L649.7,198.2 L652.2,195.4 L654.8,192.7 L657.5,190.0 L660.2,187.4 L662.9,184.8 L665.7,182.2 L668.5,179.7 L671.4,177.3 L674.3,174.9 L677.3,172.5 L680.3,170.3 L683.3,168.0 L686.4,165.8 L689.5,163.7 L692.7,161.6 L695.9,159.6 L699.1,157.6 L702.4,155.7 L705.7,153.8 L709.1,152.0 L712.4,150.2 L715.8,148.5 L719.3,146.9 L722.7,145.3 L726.2,143.8 L729.7,142.3 L733.3,140.9 L736.8,139.6 L740.4,138.3 L744.0,137.1 L747.6,135.9 L751.3,134.8 L754.9,133.8 L758.6,132.8 L762.3,131.9 L766.0,131.0 L769.7,130.2 L773.4,129.5 L777.1,128.8 L780.9,128.2 L784.6,127.6 L788.4,127.1 L792.2,126.6 L795.9,126.2 L799.7,125.9 L803.5,125.6 L807.3,125.3 L811.1,125.1 L814.9,124.9 L818.7,124.8 L822.5,124.7 L826.3,124.7 L830.1,124.7 L833.9,124.7 L837.7,124.8 L841.5,124.9 L845.3,125.1 L849.1,125.2 L852.9,125.5 L856.7,125.7 L860.5,126.0 L864.3,126.3 L868.1,126.6 L871.8,127.0 L875.6,127.4 L879.3,127.9 L883.1,128.4 L886.8,129.0 L890.5,129.7 L894.2,130.5 L897.9,131.4 L901.5,132.3 L905.2,133.4 L908.8,134.6 L912.4,135.9 L916.0,137.3 L919.4,139.0 L922.3,141.2 L924.6,144.0 L925.9,147.8Z" fill="#6b5a76"/>
<path d="M1006.4,126.3 L1005.1,128.1 L1003.9,129.8 L1002.5,131.6 L1001.2,133.3 L999.9,135.0 L998.5,136.6 L997.1,138.3 L995.7,139.9 L994.2,141.6 L992.8,143.2 L991.4,144.8 L989.9,146.5 L988.5,148.1 L987.1,149.7 L985.6,151.4 L984.2,153.1 L982.8,154.7 L981.4,156.4 L980.0,158.1 L978.7,159.9 L977.4,161.6 L976.1,163.4 L974.8,165.2 L973.5,167.0 L972.3,168.8 L971.1,170.6 L969.9,172.4 L968.7,174.3 L967.6,176.2 L966.4,178.0 L965.3,179.9 L964.2,181.8 L963.1,183.7 L962.0,185.6 L961.0,187.5 L959.9,189.4 L958.9,191.4 L957.8,193.3 L956.8,195.2 L955.8,197.1 L954.8,199.1 L953.8,201.0 L952.8,202.9 L951.8,204.9 L950.8,206.8 L949.8,208.8 L948.9,210.8 L947.9,212.7 L947.0,214.7 L946.0,216.7 L945.1,218.6 L944.2,220.6 L943.3,222.6 L942.4,224.6 L941.6,226.6 L940.7,228.6 L939.9,230.7 L939.1,232.7 L938.3,234.7 L938.7,234.9 L939.6,232.9 L940.5,230.9 L941.4,228.9 L942.3,227.0 L943.3,225.0 L944.2,223.1 L945.2,221.1 L946.2,219.2 L947.2,217.2 L948.2,215.3 L949.2,213.4 L950.2,211.4 L951.2,209.5 L952.2,207.6 L953.3,205.7 L954.3,203.8 L955.4,201.8 L956.4,199.9 L957.5,198.0 L958.5,196.1 L959.6,194.2 L960.7,192.4 L961.7,190.5 L962.8,188.6 L963.9,186.7 L965.0,184.8 L966.2,183.0 L967.3,181.1 L968.4,179.3 L969.6,177.4 L970.7,175.6 L971.9,173.8 L973.1,172.0 L974.3,170.2 L975.6,168.4 L976.8,166.6 L978.1,164.9 L979.4,163.2 L980.7,161.4 L982.1,159.7 L983.4,158.1 L984.8,156.4 L986.2,154.7 L987.6,153.1 L989.0,151.4 L990.4,149.8 L991.9,148.1 L993.2,146.4 L994.6,144.7 L996.0,143.0 L997.3,141.3 L998.7,139.5 L999.9,137.8 L1001.2,136.0 L1002.4,134.1 L1003.6,132.3 L1004.7,130.4 L1005.8,128.5 L1006.8,126.5Z" fill="#5a4a60"/>
<path d="M976.2,213.9 L974.1,218.2 L972.0,222.6 L970.0,227.0 L968.1,231.4 L966.2,235.8 L964.4,240.3 L962.7,244.8 L961.0,249.3 L959.5,253.9 L958.0,258.5 L956.6,263.1 L955.3,267.8 L954.1,272.5 L953.0,277.1 L951.9,281.9 L950.9,286.6 L950.0,291.3 L949.1,296.0 L948.2,300.8 L947.4,305.5 L946.7,310.3 L946.0,315.1 L945.4,320.0 L945.0,324.8 L944.9,329.7 L945.0,334.6 L945.4,339.4 L945.9,344.2 L946.5,349.1 L947.3,353.9 L948.0,358.6 L948.8,363.4 L949.6,368.2 L950.4,372.9 L951.2,377.7 L952.1,382.4 L953.0,387.1 L954.1,391.8 L955.2,396.5 L956.5,401.2 L957.8,405.8 L959.3,410.5 L960.8,415.1 L962.4,419.6 L964.0,424.2 L965.8,428.7 L967.6,433.1 L969.5,437.6 L971.5,442.0 L973.6,446.3 L975.8,450.6 L978.1,454.9 L980.5,459.1 L983.0,463.2 L985.6,467.3 L988.3,471.3 L991.1,475.2 L993.9,479.1 L996.8,482.9 L997.2,482.7 L994.4,478.7 L991.7,474.7 L989.1,470.7 L986.6,466.6 L984.1,462.5 L981.8,458.3 L979.5,454.1 L977.3,449.9 L975.2,445.5 L973.3,441.2 L971.4,436.8 L969.6,432.3 L967.9,427.9 L966.2,423.4 L964.7,418.8 L963.2,414.3 L961.7,409.7 L960.4,405.1 L959.1,400.5 L958.0,395.9 L956.9,391.2 L955.9,386.5 L955.0,381.8 L954.2,377.1 L953.4,372.4 L952.6,367.7 L951.9,362.9 L951.2,358.1 L950.4,353.4 L949.7,348.6 L949.1,343.9 L948.6,339.1 L948.2,334.4 L948.1,329.7 L948.2,325.0 L948.6,320.3 L949.1,315.5 L949.7,310.8 L950.4,306.0 L951.2,301.3 L951.9,296.5 L952.8,291.8 L953.6,287.1 L954.5,282.4 L955.5,277.7 L956.5,273.0 L957.6,268.4 L958.8,263.7 L960.0,259.1 L961.4,254.5 L962.8,249.9 L964.3,245.4 L965.9,240.9 L967.6,236.3 L969.3,231.9 L971.0,227.4 L972.9,222.9 L974.7,218.5 L976.6,214.1Z" fill="#5a4a60"/>
<path d="M955.8,467.5 L957.7,470.2 L959.6,472.8 L961.3,475.5 L963.1,478.3 L964.7,481.1 L966.4,483.9 L968.0,486.7 L969.6,489.5 L971.3,492.3 L973.0,495.1 L974.7,497.9 L976.5,500.7 L978.4,503.4 L980.3,506.0 L982.4,508.5 L984.5,511.0 L986.8,513.5 L989.0,515.8 L991.4,518.1 L993.7,520.4 L996.1,522.7 L998.5,524.9 L1000.9,527.1 L1003.3,529.3 L1005.7,531.5 L1008.2,533.6 L1010.6,535.8 L1013.1,537.9 L1015.6,540.0 L1018.1,542.1 L1020.6,544.2 L1023.1,546.2 L1025.7,548.2 L1028.2,550.3 L1030.8,552.3 L1033.4,554.2 L1036.0,556.2 L1038.6,558.2 L1041.2,560.1 L1043.9,562.0 L1046.5,563.9 L1049.2,565.8 L1051.9,567.7 L1054.5,569.5 L1057.2,571.3 L1059.9,573.2 L1062.6,575.0 L1065.2,576.9 L1067.9,578.7 L1070.5,580.6 L1073.2,582.4 L1075.8,584.3 L1078.4,586.3 L1081.0,588.2 L1083.5,590.2 L1086.1,592.2 L1088.6,594.2 L1091.1,596.3 L1093.6,598.4 L1093.8,598.2 L1091.6,595.7 L1089.3,593.4 L1087.0,591.2 L1084.6,588.9 L1082.2,586.8 L1079.7,584.6 L1077.2,582.5 L1074.7,580.5 L1072.1,578.4 L1069.6,576.4 L1067.0,574.4 L1064.4,572.5 L1061.8,570.5 L1059.2,568.6 L1056.6,566.6 L1054.0,564.7 L1051.4,562.8 L1048.8,560.8 L1046.2,558.9 L1043.6,557.0 L1041.0,555.0 L1038.4,553.0 L1035.8,551.1 L1033.3,549.1 L1030.7,547.1 L1028.2,545.1 L1025.6,543.1 L1023.1,541.1 L1020.6,539.1 L1018.1,537.0 L1015.6,535.0 L1013.1,532.9 L1010.6,530.8 L1008.1,528.7 L1005.7,526.6 L1003.3,524.5 L1000.8,522.3 L998.4,520.2 L996.0,518.0 L993.6,515.8 L991.3,513.6 L989.0,511.3 L986.7,509.0 L984.5,506.7 L982.4,504.3 L980.4,501.8 L978.5,499.2 L976.7,496.6 L974.8,493.9 L973.1,491.2 L971.3,488.5 L969.5,485.8 L967.8,483.0 L966.0,480.3 L964.1,477.6 L962.3,474.9 L960.3,472.3 L958.3,469.7 L956.2,467.3Z" fill="#5a4a60"/>
<path d="M997.0,427.3 L999.1,431.9 L1001.3,436.4 L1003.5,440.9 L1005.9,445.3 L1008.4,449.7 L1011.0,454.0 L1013.6,458.2 L1016.4,462.3 L1019.3,466.4 L1022.2,470.4 L1025.3,474.2 L1028.5,478.0 L1031.8,481.7 L1035.1,485.3 L1038.6,488.7 L1042.2,492.1 L1045.8,495.4 L1049.5,498.7 L1053.3,501.8 L1057.2,504.9 L1061.1,507.9 L1065.1,510.9 L1069.1,513.9 L1073.2,516.8 L1077.2,519.7 L1081.4,522.5 L1085.5,525.4 L1089.7,528.2 L1093.9,531.0 L1098.0,533.9 L1102.2,536.8 L1106.4,539.6 L1110.5,542.5 L1114.7,545.5 L1118.8,548.5 L1122.8,551.5 L1126.7,554.7 L1130.5,558.0 L1134.1,561.4 L1137.6,564.9 L1140.9,568.6 L1143.9,572.4 L1146.7,576.5 L1149.2,580.8 L1151.5,585.3 L1153.4,589.9 L1154.9,594.6 L1156.1,599.5 L1156.9,604.4 L1157.2,609.3 L1157.1,614.2 L1156.6,619.0 L1155.5,623.8 L1154.1,628.4 L1152.3,633.0 L1150.2,637.5 L1147.7,641.9 L1145.1,646.1 L1142.2,650.3 L1139.1,654.3 L1135.9,658.1 L1132.6,661.9 L1129.1,665.6 L1125.6,669.1 L1122.0,672.6 L1118.3,676.0 L1114.6,679.4 L1110.8,682.7 L1107.0,686.0 L1103.2,689.2 L1099.4,692.4 L1095.5,695.6 L1091.6,698.7 L1087.6,701.8 L1083.6,704.8 L1079.6,707.8 L1075.6,710.7 L1071.5,713.6 L1067.4,716.5 L1063.2,719.3 L1059.1,722.0 L1054.9,724.7 L1050.7,727.4 L1046.4,730.0 L1042.1,732.6 L1037.8,735.1 L1033.5,737.6 L1029.2,740.0 L1024.8,742.4 L1020.4,744.7 L1015.9,747.0 L1011.5,749.2 L1007.0,751.3 L1002.5,753.4 L998.0,755.5 L993.4,757.5 L988.9,759.4 L984.3,761.3 L979.6,763.1 L975.0,764.9 L970.3,766.6 L965.7,768.3 L960.9,769.9 L956.2,771.4 L951.5,772.9 L946.7,774.3 L941.9,775.7 L937.1,777.0 L932.3,778.2 L927.5,779.4 L922.6,780.5 L917.8,781.5 L912.9,782.5 L908.0,783.4 L903.1,784.3 L898.1,785.1 L893.2,785.8 L888.2,786.5 L883.3,787.1 L878.3,787.6 L873.3,788.1 L868.4,788.5 L863.4,788.9 L858.4,789.2 L853.4,789.4 L848.4,789.6 L843.4,789.7 L838.4,789.7 L833.4,789.7 L828.4,789.6 L823.3,789.5 L818.3,789.2 L813.3,789.0 L808.3,788.6 L803.4,788.2 L798.4,787.8 L793.4,787.2 L788.4,786.6 L783.4,786.0 L778.5,785.3 L773.5,784.5 L768.6,783.6 L763.7,782.7 L758.8,781.8 L753.9,780.7 L749.0,779.6 L744.1,778.4 L739.3,777.2 L734.5,775.9 L729.6,774.6 L724.8,773.2 L720.1,771.7 L715.3,770.2 L710.6,768.6 L705.8,766.9 L701.1,765.2 L696.5,763.4 L691.8,761.6 L687.2,759.7 L682.6,757.8 L678.0,755.8 L673.4,753.7 L668.9,751.6 L664.4,749.4 L659.9,747.2 L655.5,744.9 L651.1,742.6 L646.7,740.2 L642.3,737.7 L638.0,735.3 L633.7,732.7 L629.4,730.1 L625.2,727.4 L621.0,724.7 L616.8,722.0 L612.7,719.2 L608.6,716.3 L604.6,713.4 L600.5,710.5 L596.6,707.4 L592.6,704.4 L588.7,701.3 L584.8,698.1 L581.0,694.9 L577.2,691.7 L573.5,688.4 L569.8,685.1 L566.1,681.7 L562.5,678.3 L558.9,674.8 L555.4,671.3 L551.9,667.7 L548.5,664.1 L545.1,660.5 L541.8,656.8 L538.5,653.0 L535.2,649.3 L532.1,645.5 L528.9,641.6 L525.8,637.7 L522.8,633.8 L519.8,629.8 L516.9,625.8 L514.0,621.7 L511.2,617.6 L508.4,613.5 L505.7,609.3 L503.0,605.1 L500.4,600.9 L497.9,596.6 L495.4,592.3 L493.0,588.0 L490.6,583.6 L488.3,579.2 L486.0,574.8 L483.8,570.3 L481.7,565.8 L479.6,561.3 L477.5,556.7 L475.6,552.1 L473.6,547.5 L471.8,542.9 L470.0,538.3 L468.2,533.6 L466.5,528.9 L464.9,524.2 L463.4,519.4 L461.8,514.7 L460.4,509.9 L459.0,505.1 L457.7,500.2 L456.4,495.4 L455.2,490.6 L454.0,485.7 L452.9,480.8 L451.9,475.9 L450.9,471.0 L450.0,466.1 L449.2,461.2 L448.4,456.2 L447.6,451.3 L447.0,446.3 L446.4,441.3 L445.8,436.4 L445.3,431.4 L444.9,426.4 L444.5,421.4 L444.2,416.4 L444.0,411.4 L443.8,406.4 L443.7,401.4 L443.6,396.4 L443.6,391.4 L443.7,386.4 L443.8,381.4 L444.0,376.4 L444.3,371.4 L444.6,366.4 L445.0,361.4 L445.4,356.4 L446.0,351.5 L446.5,346.5 L447.2,341.5 L447.8,336.6 L448.6,331.6 L449.4,326.7 L450.3,321.8 L451.2,316.9 L452.2,312.0 L453.3,307.1 L454.4,302.2 L455.6,297.4 L456.8,292.5 L458.1,287.7 L459.4,282.9 L460.8,278.1 L462.3,273.3 L463.8,268.6 L465.4,263.8 L467.1,259.1 L468.8,254.4 L470.5,249.8 L472.3,245.1 L474.2,240.5 L476.1,235.9 L478.1,231.3 L480.2,226.8 L482.3,222.2 L484.4,217.7 L486.6,213.3 L488.9,208.8 L491.2,204.4 L493.6,200.0 L496.0,195.7 L498.5,191.4 L501.0,187.1 L503.6,182.8 L506.3,178.6 L509.0,174.4 L511.7,170.3 L514.5,166.1 L517.4,162.1 L520.3,158.0 L523.2,154.0 L526.3,150.0 L529.3,146.1 L532.5,142.2 L535.6,138.4 L538.8,134.6 L542.1,130.8 L545.4,127.1 L548.8,123.4 L552.2,119.8 L555.7,116.2 L559.3,112.7 L562.8,109.2 L566.5,105.8 L570.1,102.4 L573.8,99.0 L577.6,95.7 L581.4,92.5 L585.3,89.3 L589.2,86.1 L593.1,83.0 L597.1,80.0 L601.1,77.0 L605.1,74.0 L609.2,71.1 L613.4,68.3 L617.5,65.5 L621.8,62.8 L626.0,60.1 L630.3,57.5 L634.6,54.9 L638.9,52.4 L643.3,49.9 L647.7,47.5 L652.1,45.2 L656.6,42.9 L661.1,40.7 L665.6,38.5 L670.2,36.4 L674.7,34.3 L679.3,32.3 L684.0,30.4 L688.6,28.5 L693.3,26.7 L698.0,24.9 L702.7,23.2 L707.4,21.6 L712.2,20.0 L716.9,18.5 L721.7,17.1 L726.5,15.7 L731.3,14.4 L736.2,13.2 L741.0,12.0 L745.9,10.9 L750.8,9.8 L755.6,8.9 L760.5,7.9 L765.4,7.1 L770.3,6.3 L775.3,5.6 L780.2,5.0 L785.1,4.4 L790.1,3.9 L795.0,3.5 L800.0,3.1 L804.9,2.9 L809.9,2.6 L814.8,2.5 L819.8,2.4 L824.7,2.4 L829.7,2.5 L834.6,2.6 L839.6,2.8 L844.6,3.1 L849.5,3.4 L854.5,3.8 L859.4,4.2 L864.4,4.7 L869.3,5.3 L874.3,5.9 L879.2,6.5 L884.1,7.3 L889.1,8.1 L894.0,8.9 L898.9,9.8 L903.8,10.7 L908.7,11.7 L913.6,12.8 L918.5,13.9 L923.4,15.0 L928.3,16.2 L933.2,17.4 L938.0,18.7 L942.9,20.0 L947.7,21.4 L952.5,22.8 L957.3,24.3 L962.1,25.8 L966.9,27.3 L971.7,29.0 L976.4,30.6 L981.1,32.4 L985.8,34.2 L990.4,36.0 L995.0,38.0 L999.6,40.0 L1004.1,42.1 L1008.6,44.2 L1013.0,46.5 L1017.4,48.8 L1021.8,51.2 L1026.1,53.6 L1030.3,56.2 L1034.5,58.9 L1038.7,61.6 L1042.7,64.4 L1046.6,67.4 L1050.4,70.6 L1053.9,74.0 L1057.1,77.5 L1060.0,81.4 L1062.5,85.5 L1064.6,90.0 L1066.2,94.8 L1067.3,99.8 L1068.0,105.0 L1068.3,110.2 L1068.1,115.4 L1067.4,120.4 L1066.4,125.3 L1065.1,130.0 L1063.3,134.5 L1061.3,138.9 L1059.0,143.2 L1056.5,147.3 L1053.8,151.4 L1050.8,155.4 L1047.8,159.4 L1044.6,163.3 L1041.3,167.2 L1038.0,171.0 L1034.6,174.9 L1031.3,178.7 L1028.0,182.6 L1024.7,186.6 L1021.6,190.6 L1018.5,194.6 L1015.6,198.7 L1012.8,202.9 L1010.1,207.1 L1007.5,211.4 L1005.0,215.7 L1002.6,220.1 L1000.3,224.5 L998.1,229.0 L996.0,233.5 L994.1,238.1 L992.2,242.6 L990.4,247.3 L988.8,251.9 L987.2,256.6 L985.8,261.4 L984.4,266.1 L983.2,270.9 L982.0,275.7 L981.0,280.5 L980.1,285.4 L979.3,290.3 L978.5,295.2 L977.9,300.1 L977.4,305.0 L977.0,309.9 L976.7,314.9 L976.4,319.9 L976.3,324.8 L976.3,329.8 L976.4,334.8 L976.6,339.7 L976.9,344.7 L977.3,349.7 L977.8,354.6 L978.4,359.6" fill="none" stroke="#356fd8" stroke-width="3" stroke-linejoin="round"/>
<rect x="794.2" y="386.4" width="19.5" height="18.5" fill="#c8c8c8"/>
<rect x="813.7" y="393.9" width="168" height="2" fill="#8b1c1c"/>
<rect x="803" y="409" width="2" height="163" fill="#3f9a3f"/>
<rect x="783" y="389" width="21.9" height="20.7" fill="#1616b8"/>
<rect x="981" y="385.5" width="19" height="19" fill="#c40f0f"/>
<rect x="793.5" y="571" width="20.5" height="21" rx="2" fill="#12b412"/>
</svg>
<!-- watermark -->
<div class="wm"></div>
<svg class="abs" style="left:0;top:0" width="90" height="90" viewBox="0 0 90 90">
  <defs><filter id="bl"><feGaussianBlur stdDeviation="1.6"/></filter></defs>
  <path d="M17,40 C15,30 24,22 36,23 C46,19 61,23 64,33 C70,42 65,55 56,58 C47,64 34,61 28,57 C20,54 17,48 17,40Z" fill="#bbe7e0" filter="url(#bl)"/>
  <g font-family="'Liberation Serif',serif" font-style="italic" fill="#8c8c8c">
    <text x="17" y="31.5" font-size="14.5" textLength="47" lengthAdjust="spacingAndGlyphs">The Crafts</text>
    <text x="33.6" y="45.8" font-size="11.5" textLength="16.5" lengthAdjust="spacingAndGlyphs">and</text>
    <text x="14" y="61" font-size="14.5" textLength="56" lengthAdjust="spacingAndGlyphs">Glitter Shop</text>
  </g>
</svg>

<!-- STL icon -->
<svg class="abs" style="left:300px;top:108px" width="104" height="110" viewBox="300 108 104 110">
  <rect x="305" y="113.5" width="94" height="99" fill="#ffffff"/>
  <path d="M319.2,114.2 H357.5 V135 Q357.5,144.8 367.5,144.8 H388.8 V202.4 Q388.8,207.4 383.8,207.4 H319.2 Q314.2,207.4 314.2,202.4 V119.2 Q314.2,114.2 319.2,114.2Z" fill="#3a48c8"/>
  <path d="M363.2,115 L388,140.5 H370 Q363.2,140.5 363.2,134Z" fill="#3a48c8"/>
  <path d="M305,123.5 H343 Q348.3,123.5 348.3,129 V151 Q348.3,156 343,156 H305Z" fill="#ffffff"/>
  <path d="M307,127.7 H341 Q344,127.7 344,130.7 V149 Q344,152 341,152 H307Z" fill="#3a48c8"/>
  <text x="308.6" y="144.8" font-family="'Liberation Sans',sans-serif" font-weight="bold" font-size="13.8" textLength="23" lengthAdjust="spacingAndGlyphs" fill="#ffffff">STL</text>
  <rect x="327" y="161" width="49" height="4.7" fill="#ffffff"/>
  <rect x="327" y="175.8" width="49" height="4.5" fill="#ffffff"/>
  <rect x="327" y="189.9" width="49" height="4.6" fill="#ffffff"/>
</svg>

<!-- panel -->
<div class="panel">
  <svg class="abs" style="left:-14px;top:16px" width="14" height="28" viewBox="0 0 14 28"><path d="M14,1.5 L2.8,13.8 L14,26" fill="#ffffff" stroke="#d4d4d4" stroke-width="1"/></svg>
  <div class="lbl" style="top:17px;color:#d9364f">X</div>
  <div class="lbl" style="top:55px;color:#66d566">Y</div>
  <div class="lbl" style="top:93px;color:#1c1c80">Z</div>
  <div class="inp" style="left:31px;top:15px"><span class="v">77.7747</span><span class="u mm">mm</span></div>
  <div class="inp" style="left:31px;top:53px"><span class="v">85.7268</span><span class="u mm">mm</span></div>
  <div class="inp" style="left:31px;top:91px"><span class="v">15</span><span class="u mm">mm</span></div>
  <div class="inp" style="left:204px;top:15px"><span class="v">100</span><span class="u">%</span></div>
  <div class="inp" style="left:204px;top:53px"><span class="v">100</span><span class="u">%</span></div>
  <div class="inp" style="left:204px;top:91px"><span class="v">100</span><span class="u">%</span></div>
  <div class="btn">
    <svg width="58" height="58" viewBox="44 401 58 58">
      <path d="M67.8,413.3 Q60.6,413.4 60.6,421.3" fill="none" stroke="#14144e" stroke-width="1.5"/>
      <path d="M56.5,421.6 L64.3,420.3 L61.5,426.4Z" fill="#14144e"/>
      <path d="M65.4,421.6 H84.7 L79.8,431.6 L87.3,446.3 H73" fill="none" stroke="#14144e" stroke-width="1.2"/>
      <path d="M65.4,421.6 L69.2,430.6" fill="none" stroke="#14144e" stroke-width="1.2"/>
      <path d="M61.7,429.6 H71.6 L69.4,434.4 L74.4,446.9 H57.8 L63.9,434.4Z" fill="#14144e"/>
    </svg>
  </div>
  <div class="cb" style="top:136px"></div>
  <div class="cb" style="top:173px"><svg width="20" height="20" viewBox="0 0 20 20" style="position:absolute;left:0;top:0"><path d="M5.6,9.6 L8.4,12.4 L13.6,6.4" fill="none" stroke="#4a9bd6" stroke-width="1.7"/></svg></div>
  <div class="ct" style="top:140px">Snap Scaling</div>
  <div class="ct" style="top:177px;letter-spacing:0.34px">Uniform Scaling</div>
</div>
<div class="pshadow"></div>

<!-- bottom-left -->
<svg class="abs" style="left:12px;top:706px" width="22" height="16" viewBox="12 706 22 16"><path d="M16.3,717.4 L22.4,711 L28.5,717.4" fill="none" stroke="#555" stroke-width="1.9"/></svg>
<div class="t" style="left:45.5px;top:707.7px;font-size:13px">Object list</div>
<svg class="abs" style="left:12px;top:740px" width="22" height="22" viewBox="12 740 22 22">
  <path d="M14,759.6 L15.2,754.4 L26,743.6 L30,747.6 L19.2,758.4Z" fill="#585858"/>
  <path d="M26.9,742.7 L28.1,741.9 Q29,741.4 29.8,742.2 L31.6,744 Q32.3,744.8 31.8,745.6 L30.9,746.7Z" fill="#585858"/>
  <path d="M14.9,757 L16.6,758.7 L14.4,759.3Z" fill="#f5f5f5"/>
</svg>
<div class="t" style="left:48.3px;top:743.5px;font-size:12px">STL00561-1</div>
<div class="t" style="left:13.6px;top:773.5px;font-size:12.55px">77.8 x 85.7 x 15.0 mm</div>

<!-- view cubes -->
<svg class="abs" style="left:14px;top:808px" width="180" height="28" viewBox="14 808 180 28">
  <g fill="#555" stroke="none">
    <path d="M28.2,812.6 L36.4,816.6 L28.2,820.4 L20,816.6Z"/>
    <path d="M19.2,818.2 L27.4,822 V830.2 L19.2,826.2Z"/>
    <path d="M37.2,818.2 L29,822 V830.2 L37.2,826.2Z"/>
  </g>
  <g fill="none" stroke="#555" stroke-width="1">
    <path d="M57.7,819.3 H69 V830.6 H57.7Z M57.7,819.3 L64.3,813 H75.3 L69,819.3 M75.3,813 V824.4 L69,830.6"/>
    <path d="M95.7,819.3 H107 V830.6 H95.7Z M95.7,819.3 L102.3,813 H113.3 L107,819.3 M113.3,813 V824.4 L107,830.6"/>
    <path d="M171.7,819.3 H183 V830.6 H171.7Z M171.7,819.3 L178.3,813 H189.3 L183,819.3 M189.3,813 V824.4 L183,830.6"/>
    <path d="M139.3,819.3 H150.6 V830.6 H139.3Z M150.6,819.3 L144.3,813 H133.3 L139.3,819.3 M133.3,813 V824.4 L139.3,830.6"/>
  </g>
  <path d="M57.7,819.3 H69 V830.6 H57.7Z" fill="#555"/>
  <path d="M95.7,819.3 L102.3,813 H113.3 L107,819.3Z" fill="#555"/>
  <path d="M133.3,813 L139.3,819.3 V830.6 L133.3,824.4Z" fill="#555"/>
  <path d="M183,819.3 L189.3,813 V824.4 L183,830.6Z" fill="#555"/>
</svg>

</body></html>
